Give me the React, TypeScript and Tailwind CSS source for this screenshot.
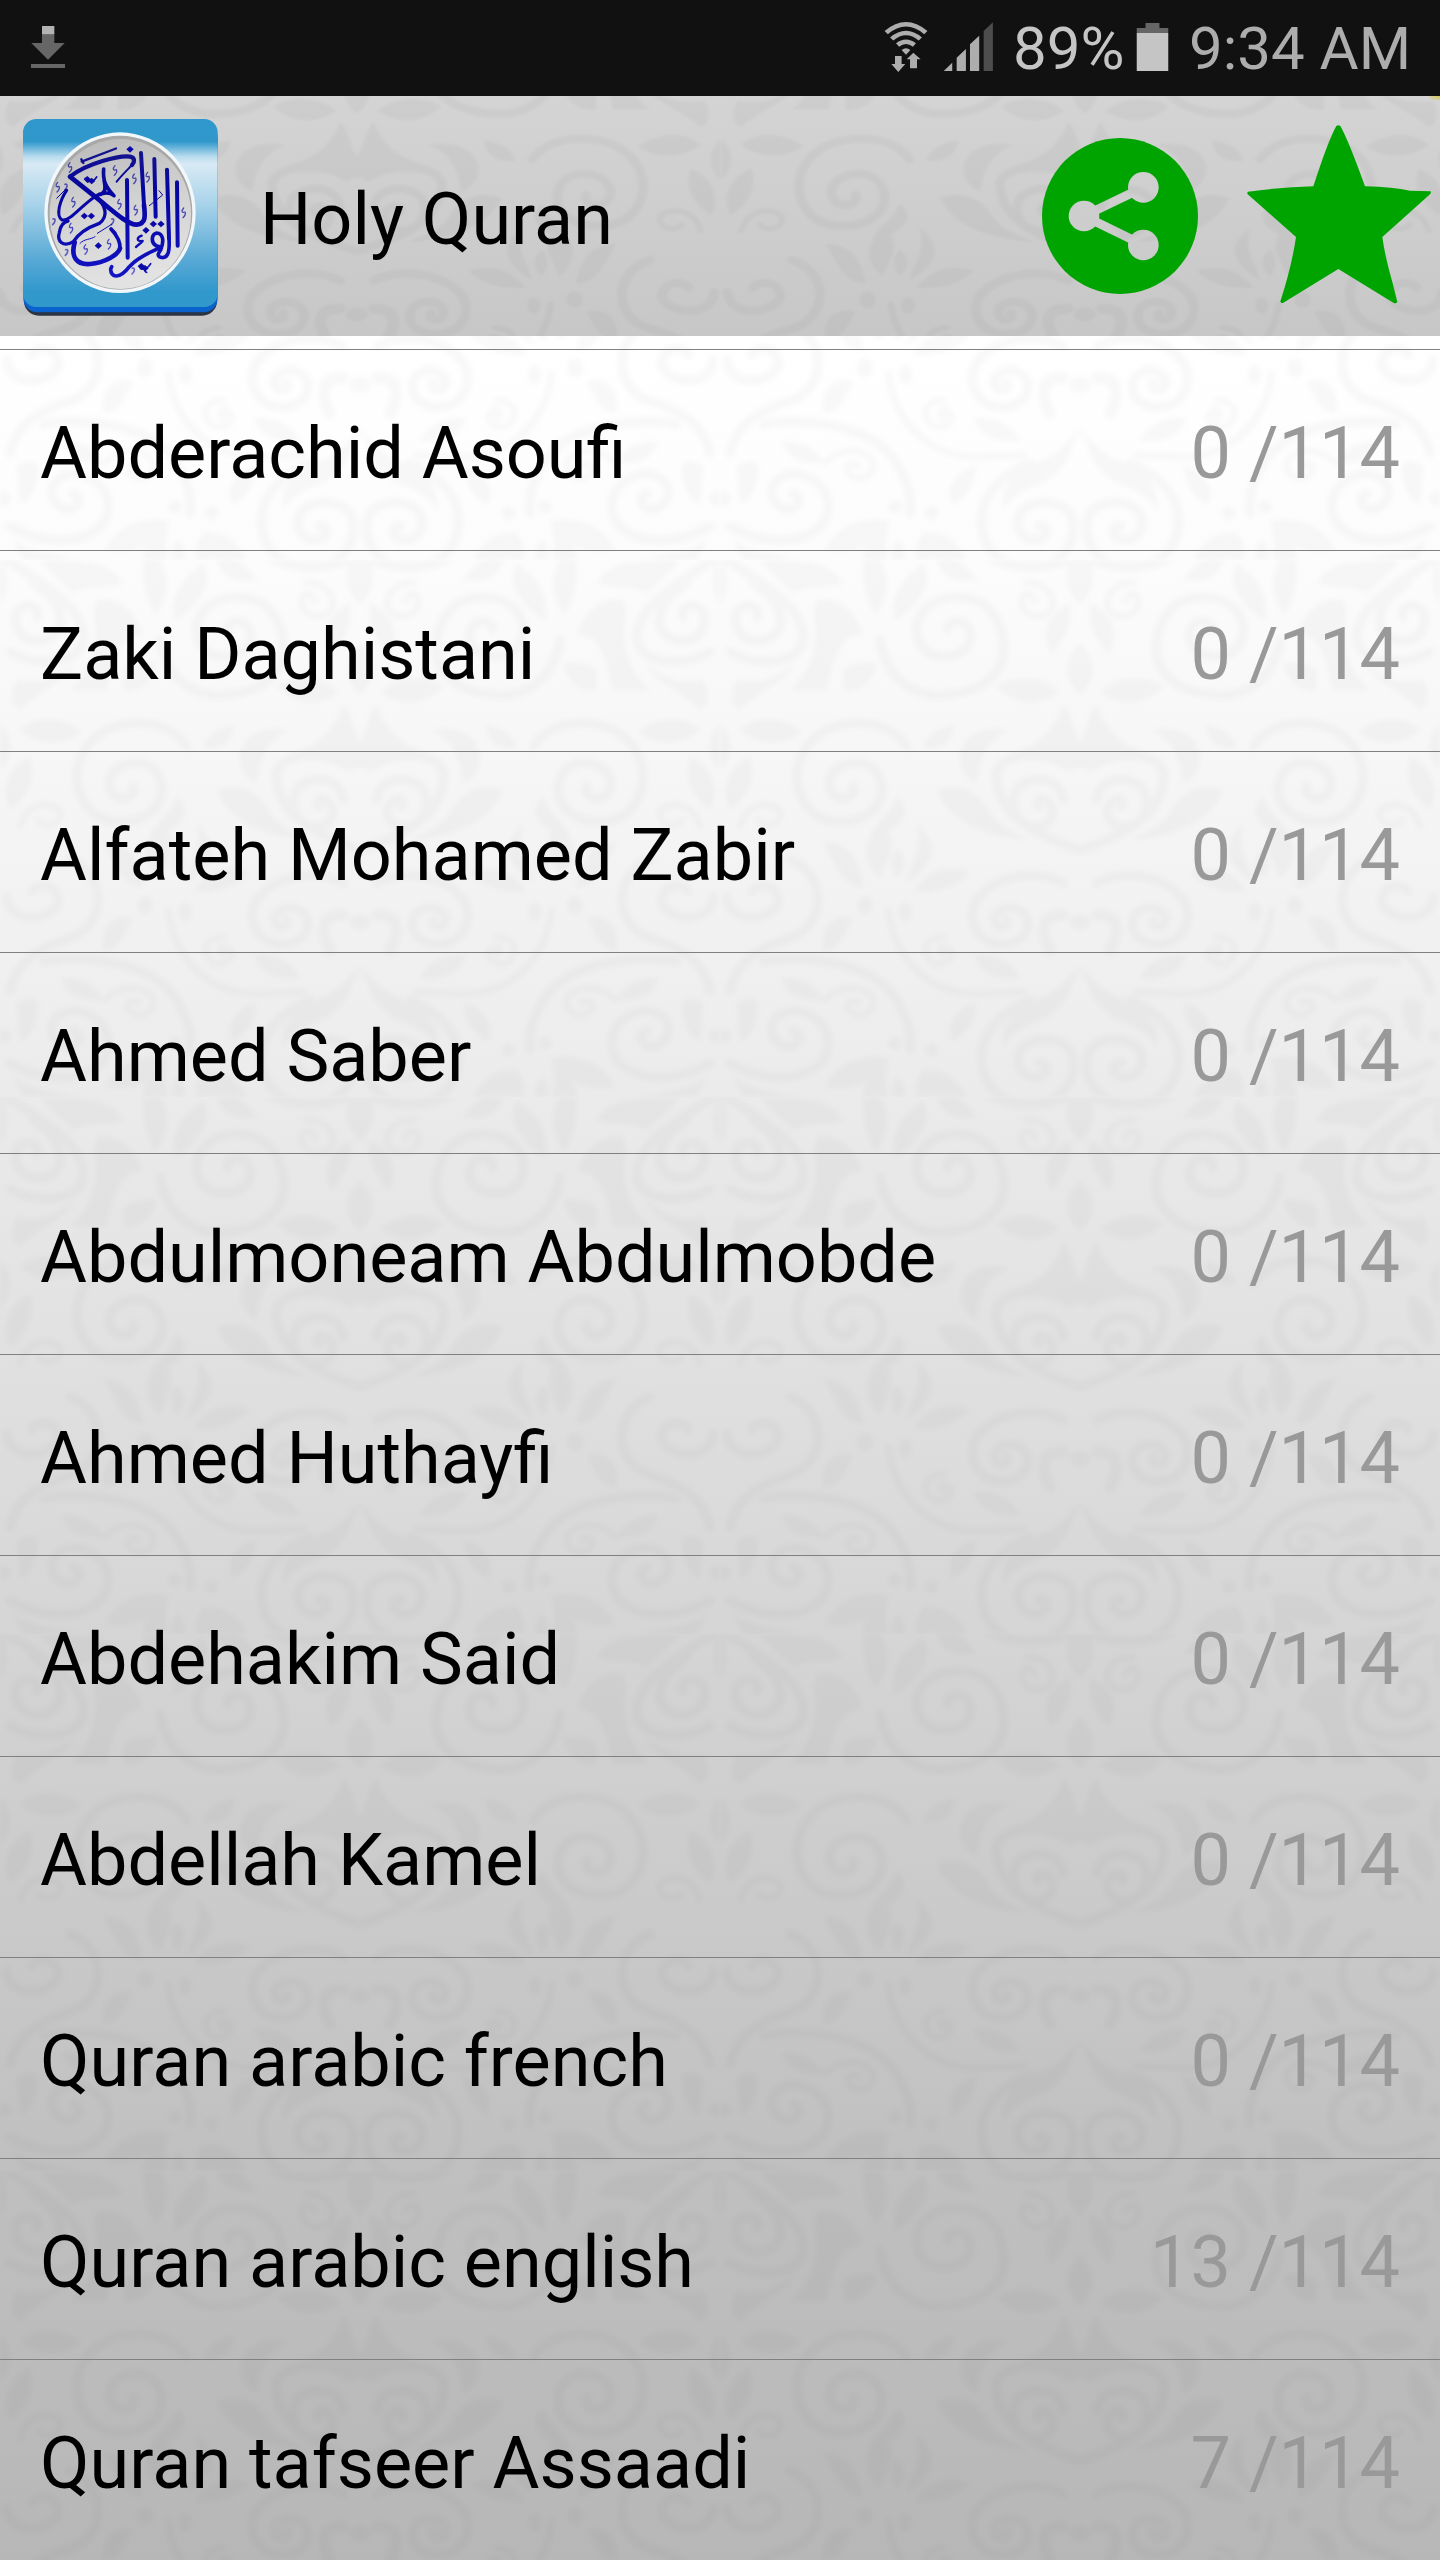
interface Reciter {
  name: string;
  done: number;
}

const TOTAL = 114;

const reciters: Reciter[] = [
  { name: 'Abderachid Asoufi', done: 0 },
  { name: 'Zaki Daghistani', done: 0 },
  { name: 'Alfateh Mohamed Zabir', done: 0 },
  { name: 'Ahmed Saber', done: 0 },
  { name: 'Abdulmoneam Abdulmobde', done: 0 },
  { name: 'Ahmed Huthayfi', done: 0 },
  { name: 'Abdehakim Said', done: 0 },
  { name: 'Abdellah Kamel', done: 0 },
  { name: 'Quran arabic french', done: 0 },
  { name: 'Quran arabic english', done: 13 },
  { name: 'Quran tafseer Assaadi', done: 7 },
];

// One half of the damask tile, the other half is its mirror image
function DamaskHalf() {
  return (
    <g transform="scale(0.33333)" stroke="#000" strokeLinecap="round" strokeLinejoin="round">
      <g transform="translate(-30 -60)">
        <g fill="none" strokeWidth="28">
          <path d="M510 300 C530 420 620 480 720 463 C850 450 895 370 878 290 C860 200 800 165 720 172 C650 182 610 230 622 290 C635 340 680 358 730 345 C785 330 795 280 765 250 C740 235 710 245 712 270" />
          <path d="M590 620 C560 570 500 545 430 550 C330 555 265 620 260 710 C265 790 310 845 390 845 C480 845 522 790 515 735 C505 680 460 658 410 672 C355 690 345 735 372 765 C400 785 440 770 430 740" />
          <path d="M1110 930 C1000 890 860 840 858 700 C875 635 1010 630 1080 680" />
          <path d="M1060 780 C1050 710 960 700 918 750 C890 815 935 870 990 858 C1035 848 1040 800 1010 782 C985 770 975 790 985 800" />
          <path d="M50 60 C180 140 285 210 280 300 C270 370 140 385 60 335" />
          <path d="M140 230 C160 200 100 180 78 220 C65 280 120 320 180 295 C235 260 220 190 130 130" />
          <path d="M975 180 C960 150 930 160 935 190 C945 240 1010 240 1028 200 C1035 160 1000 125 950 130" strokeWidth="18" />
          <path d="M820 40 C880 90 1000 90 1080 60" />
          <path d="M90 860 C110 790 170 780 210 810 C220 850 170 870 145 840" strokeWidth="18" />
        </g>
        <g stroke="none">
          <path d="M1110 310 C1060 360 1060 420 1110 465 C1160 420 1160 360 1110 310Z" />
          <path d="M1110 40 C1065 70 1050 130 1110 195 C1170 130 1155 70 1110 40Z" />
          <path d="M1080 190 C1010 220 990 290 1025 340 C1060 300 1090 260 1080 190Z" />
          <path d="M860 440 C920 400 1000 410 1050 455 C990 500 920 500 860 440Z" />
          <path d="M90 570 C140 520 220 530 275 575 C220 620 140 615 90 570Z" />
          <path d="M640 625 C650 580 690 560 735 555 C730 600 700 630 640 625Z" />
          <path d="M680 750 C740 730 790 740 830 800 C850 850 900 870 960 900 C830 890 720 850 680 750Z" />
          <path d="M750 640 C770 570 830 560 900 570 C830 600 810 650 800 730 C765 710 745 680 750 640Z" />
          <path d="M900 640 C990 620 1040 560 1060 490 C1100 540 1080 600 1140 640 V700 C1060 660 1000 630 900 640Z" />
          <path d="M120 650 C50 680 30 760 60 810 C110 770 140 720 120 650Z" />
          <path d="M150 60 C260 70 350 50 400 130 C350 150 290 130 250 160 C210 120 180 100 150 60Z" />
          <path d="M320 180 C390 170 430 210 460 280 C420 290 380 290 350 450 H240 C300 400 330 320 310 220Z" />
          <path d="M80 420 C160 440 220 400 250 370 C240 420 150 450 90 510 C60 500 60 450 80 420Z" />
          <path d="M400 390 C430 370 470 365 500 370 C490 420 450 460 400 450Z" />
          <path d="M460 60 C455 120 470 180 495 225 C540 170 540 110 510 60Z" />
          <path d="M640 70 C570 120 540 170 555 245 C600 210 680 150 640 70Z" />
          <path d="M680 60 C690 110 740 130 800 120 C780 90 760 70 740 60Z" />
          <path d="M30 50 C60 100 50 170 30 200Z" />
          <path d="M30 550 C80 600 60 660 30 690Z" />
          <path d="M560 770 C610 810 580 870 480 890 C490 850 540 830 560 770Z" />
        </g>
      </g>
      <g transform="translate(-30 780)">
        <g fill="none" strokeWidth="28">
          <path d="M1060 190 C980 145 850 165 795 245 C765 320 820 385 900 370 C965 352 970 285 920 265 C870 252 835 290 862 318 C885 328 900 310 890 300" />
          <path d="M60 730 C160 785 280 790 340 720 C385 640 320 570 240 572 C170 590 168 655 225 680 C270 682 280 640 250 632" />
          <path d="M160 425 C240 405 480 410 560 540 C595 600 605 640 600 690" />
          <path d="M535 270 C550 400 640 520 800 522 L940 516" strokeWidth="20" />
          <path d="M445 550 C430 530 400 550 420 575 C450 600 495 580 490 540 C470 495 390 490 345 540" strokeWidth="18" />
          <path d="M700 405 C680 395 690 375 715 385 C740 410 710 440 670 430 C630 400 640 355 700 350" strokeWidth="18" />
          <path d="M960 540 C860 580 810 650 815 720 C820 820 900 860 980 850 C1080 840 1110 740 1080 690 C1040 640 940 650 925 705 C915 755 960 785 1000 765 C1020 745 1005 725 985 728" />
          <path d="M240 120 C350 160 350 310 250 350 C150 380 80 420 60 510" />
          <path d="M50 230 C55 310 170 310 205 250 C210 200 150 180 125 215" />
          <path d="M1020 390 C985 320 1000 285 1060 285" strokeWidth="34" />
          <path d="M1140 860 V700" />
        </g>
        <g stroke="none">
          <path d="M1125 430 C1075 460 1070 510 960 545 C890 580 870 640 880 680 C930 600 1000 620 1050 560 C1090 520 1080 470 1125 430Z" />
          <ellipse cx="1110" cy="305" rx="32" ry="24" />
          <path d="M790 405 C860 400 910 430 930 475 C860 480 810 460 790 405Z" />
          <path d="M800 550 C740 560 705 610 725 665 C780 640 790 600 800 550Z" />
          <path d="M430 295 C370 280 330 320 340 390 C390 390 400 350 430 295Z" />
          <path d="M340 65 C400 70 440 90 460 200 C400 200 380 140 340 65Z" />
          <path d="M610 215 C660 140 720 140 780 155 C730 210 680 215 610 215Z" />
          <path d="M520 10 C450 60 460 130 510 175 C530 110 570 80 520 10Z" />
          <path d="M620 10 C670 60 700 110 590 190 C600 130 640 100 620 10Z" />
          <path d="M560 85 C530 120 550 160 560 175 C590 150 590 110 560 85Z" />
          <ellipse cx="465" cy="255" rx="24" ry="28" />
          <ellipse cx="585" cy="275" rx="20" ry="28" />
          <path d="M215 475 C280 470 320 500 340 540 C280 545 230 530 215 475Z" />
          <path d="M80 550 C110 530 150 530 145 560 C140 620 120 650 90 665Z" />
          <path d="M30 625 C75 630 75 665 30 672Z" />
          <path d="M345 800 C380 730 450 700 540 715 C510 780 430 820 345 800Z" />
          <path d="M540 735 C470 760 450 810 460 870 H510 C560 810 500 790 540 735Z" />
          <path d="M640 750 C720 740 760 800 790 870 C720 880 660 840 640 750Z" />
          <path d="M640 750 C600 800 620 850 650 880 C680 830 660 780 640 750Z" />
          <path d="M565 770 C535 800 540 840 565 860 C595 840 590 800 565 770Z" />
          <circle cx="555" cy="670" r="20" />
          <circle cx="665" cy="690" r="20" />
          <path d="M70 770 C140 830 280 810 400 870 H170 C120 860 80 810 70 770Z" />
        </g>
      </g>
    </g>
  );
}

interface DamaskProps {
  id: string;
  transform: string;
  blur: number;
  opacity: number;
}

function Damask({ id, transform, blur, opacity }: DamaskProps) {
  return (
    <svg className="absolute inset-0 w-full h-full" aria-hidden="true">
      <defs>
        <clipPath id={`${id}-half`}>
          <rect width="360" height="537" />
        </clipPath>
        <pattern id={id} width="720" height="537" patternUnits="userSpaceOnUse" patternTransform={transform}>
          <g filter={`url(#${id}-soft)`}>
            <g clipPath={`url(#${id}-half)`}>
              <DamaskHalf />
            </g>
            <g transform="translate(720 0) scale(-1 1)">
              <g clipPath={`url(#${id}-half)`}>
                <DamaskHalf />
              </g>
            </g>
          </g>
        </pattern>
        <filter id={`${id}-soft`} filterUnits="userSpaceOnUse" x="0" y="0" width="720" height="537">
          <feGaussianBlur stdDeviation={blur} />
        </filter>
      </defs>
      <rect width="100%" height="100%" fill={`url(#${id})`} opacity={opacity} />
    </svg>
  );
}

function StatusBar() {
  return (
    <div className="h-24 bg-[#111111] flex items-start overflow-hidden">
      <svg className="ml-[31px] mt-[26px] w-[34px] h-[42px]" viewBox="93 78 102 126">
        <path fill="#666" d="M126 103h37v26h31l-50 50-50-50h32z M93 192h102v12H93z" />
        <path fill="#b3b3b3" d="M126 78h37v25h-37z" />
      </svg>
      <svg
        className="ml-auto mt-[21px] w-[44px] h-[51px] shrink-0"
        viewBox="66 63 120 153"
        preserveAspectRatio="none"
      >
        <g fill="none" stroke="#adadad" strokeWidth="13">
          <path d="M72 98 Q126 48 180 98" />
          <path d="M87 117 Q126 81 165 117" />
          <path d="M103 135 Q126 116 149 135" />
        </g>
        <path fill="#adadad" d="M114 150 Q126 139 138 150 L126 164Z" />
        <path fill="#adadad" d="M96 168h18v24h10l-19 24-19-24h10z M137 205v-27h-9l18-20 20 20h-10v27z" />
      </svg>
      <svg
        className="ml-[15px] mt-[21px] w-[51px] h-[51px] shrink-0"
        viewBox="225 63 138 153"
        preserveAspectRatio="none"
      >
        <path fill="#adadad" d="M227 213l23-25v25z M262 213v-40l25-26v66z M298 213v-80l25-26v106z" />
        <path fill="#4d4d4d" d="M335 213V93l25-26v146z" />
      </svg>
      <div className="ml-[19px] mt-[14px] w-[123px] shrink-0 text-[60px] leading-[70px] text-[#c5c5c5] whitespace-nowrap">
        89%
      </div>
      <svg className="mt-[21px] w-[33px] h-[51px] shrink-0" viewBox="747 63 90 153" preserveAspectRatio="none">
        <path fill="#666" d="M773 69h38v15h24v15h-86V84h24z" />
        <path fill="#c5c5c5" d="M749 99h86v114h-86z" />
      </svg>
      <div className="ml-5 mt-[14px] w-[251px] shrink-0 text-[60px] leading-[70px] text-[#adadad] whitespace-nowrap">
        9:34 AM
      </div>
    </div>
  );
}

const hooks = [
  [90, 126], [225, 135], [283, 160], [323, 155], [53, 185], [100, 230], [238, 236], [287, 254],
  [431, 262], [93, 308], [137, 372], [207, 356],
];
const commas = [
  [42, 290], [80, 382], [280, 438], [78, 186], [218, 290],
];
const dots = [
  [133, 273], [154, 273], [175, 362], [340, 297], [363, 297], [318, 316], [270, 73], [142, 163],
  [155, 168], [304, 424], [315, 430],
];

function AppLogo() {
  return (
    <svg className="w-[196px] h-[198px] shrink-0" viewBox="69 354 588 594">
      <defs>
        <linearGradient id="tile" x1="0" y1="0" x2="0" y2="1">
          <stop offset="0" stopColor="#2f97cb" />
          <stop offset="0.12" stopColor="#3198cc" />
          <stop offset="0.2" stopColor="#b9dcee" />
          <stop offset="0.24" stopColor="#d8eaf4" />
          <stop offset="0.45" stopColor="#a9d3ea" />
          <stop offset="0.75" stopColor="#57a9d5" />
          <stop offset="0.92" stopColor="#3198cc" />
          <stop offset="1" stopColor="#3198cc" />
        </linearGradient>
        <linearGradient id="disc" x1="0" y1="0" x2="0.2" y2="1">
          <stop offset="0" stopColor="#b8b8b8" />
          <stop offset="0.5" stopColor="#d2d2d2" />
          <stop offset="1" stopColor="#e2e2e2" />
        </linearGradient>
        <linearGradient id="ink" gradientUnits="userSpaceOnUse" x1="0" y1="70" x2="0" y2="460">
          <stop offset="0" stopColor="#15158c" />
          <stop offset="0.35" stopColor="#0505a0" />
          <stop offset="1" stopColor="#1414c4" />
        </linearGradient>
      </defs>
      <rect x="72" y="380" width="579" height="567" rx="44" fill="#2b3440" />
      <rect x="70" y="370" width="583" height="567" rx="42" fill="#0a62cc" />
      <rect x="69" y="357" width="584" height="564" rx="40" fill="url(#tile)" />
      <ellipse cx="360" cy="638" rx="227" ry="241" fill="#f1f7fa" />
      <ellipse cx="360" cy="638" rx="217" ry="231" fill="#a8a8a8" />
      <ellipse cx="361" cy="642" rx="212" ry="225" fill="url(#disc)" />
      <g transform="translate(120 375)" fill="none" stroke="url(#ink)" strokeWidth="11" strokeLinecap="round" strokeLinejoin="round">
        <path strokeWidth="7" d="M125 110 L228 70.5 M124 103 L130 114" />
        <path strokeWidth="13" d="M90 155 C140 115 240 90 270 95 C286 98 284 112 276 120" />
        <path strokeWidth="6" d="M276 120 C262 135 246 150 230 170" />
        <path strokeWidth="14" d="M90 155 L165 215 C205 245 260 300 290 299 C318 296 316 275 312 240" />
        <path strokeWidth="12" d="M312 240 L303 84" />
        <path d="M165 215 C125 240 90 290 66 285 C46 272 60 225 80 196" strokeWidth="9" />
        <path d="M191 132 C188 165 196 185 222 212 C205 198 180 205 165 215 M192 165 C198 195 195 200 182 208" />
        <path d="M165 215 C200 240 205 275 178 295 C150 305 115 325 100 350 C70 368 50 350 58 322 C62 300 74 290 84 288" strokeWidth="10" />
        <path strokeWidth="14" d="M104 352 C92 395 108 420 150 417 C195 414 236 388 240 370" />
        <path d="M240 372 C242 350 228 328 213 312 L225 325" />
        <path d="M261 165 L263 398 M343 102 L347 275 M381 134 L387 340 M411 172 L413 362" strokeWidth="12" />
        <path d="M387 340 C390 385 382 402 362 397 C350 392 355 385 362 375 C374 345 368 325 350 324 C334 328 332 352 348 362 L362 366 C340 380 300 390 268 425 C240 462 212 460 212 432 L215 425" />
        <path strokeWidth="3" d="M120 355 C135 340 150 345 165 335 M172 325 L215 298 M50 220 L78 192 M328 242 L368 210 L357 197" />
        <path strokeWidth="7" d="M305 332 C288 338 290 350 308 348 C300 358 292 360 288 366" />
        <path strokeWidth="5" d="M136 160 q6 18 14 6 q8 8 20 -10 M298 422 q6 18 14 6 q8 6 20 -12 M316 430 q-4 10 4 12" />
        {hooks.map(([x, y]) => (
          <path key={`${x}-${y}`} strokeWidth="4" strokeOpacity="0.7" d={`M${x} ${y - 13} c-8 9 -6 16 4 12 c4 7 -1 12 -6 17`} />
        ))}
        {commas.map(([x, y]) => (
          <path key={`${x}-${y}`} strokeWidth="5" strokeOpacity="0.6" d={`M${x - 3} ${y - 8} c8 -3 9 8 -1 17`} />
        ))}
      </g>
      <g transform="translate(120 375)" fill="#0a0aa8">
        {dots.map(([x, y]) => (
          <path key={`${x}-${y}`} d={`M${x} ${y - 10} l11 10 -11 10 -11 -10z`} />
        ))}
      </g>
    </svg>
  );
}

function ShareIcon() {
  return (
    <svg className="w-[158px] h-[158px]" viewBox="63 140 474 474">
      <mask id="share-nodes" maskUnits="userSpaceOnUse" x="63" y="140" width="474" height="474">
        <rect x="63" y="140" width="474" height="474" fill="#fff" />
        <g fill="#000" stroke="#000">
          <path d="M370 291 L192 377 L370 464" fill="none" strokeWidth="27" />
          <circle cx="192" cy="377" r="46" stroke="none" />
          <circle cx="370" cy="291" r="46" stroke="none" />
          <circle cx="370" cy="464" r="46" stroke="none" />
        </g>
      </mask>
      <circle cx="300" cy="377" r="234" fill="#00a400" mask="url(#share-nodes)" />
    </svg>
  );
}

function StarIcon() {
  return (
    <svg className="w-[187px] h-[181px]" viewBox="678 102 561 543">
      <path
        fill="#00a400"
        d="M949 108 Q955 103 961 108 Q985 150 1035 289 Q1120 291 1170 302 L1232 304 Q1234 308 1230 313 L1087 441 Q1095 500 1118 580 L1132 636 Q1128 642 1120 638 L955 537 L790 638 Q782 642 781 634 Q815 530 828 441 L683 313 Q680 308 684 305 Q790 291 880 289 Q925 150 949 108Z"
      />
    </svg>
  );
}

function Header() {
  return (
    <header className="relative h-60 bg-linear-to-b from-[#d4d4d4] to-[#c7c7c7]">
      <Damask id="damask-header" transform="translate(-7 -101.6) scale(1.011 0.885)" blur={1.5} opacity={0.032} />
      <span className="absolute right-0 top-0 w-2.5 h-1 bg-linear-to-bl from-[#d2c850] to-transparent" />
      <div className="relative h-full flex items-start">
        <div className="ml-[23px] mt-[22px]">
          <AppLogo />
        </div>
        <h1 className="ml-[41px] h-full pt-[7px] flex items-center text-7xl text-black">Holy Quran</h1>
        <button type="button" className="ml-auto mt-[41px]">
          <ShareIcon />
        </button>
        <button type="button" className="ml-[47px] mr-[7px] mt-[28px]">
          <StarIcon />
        </button>
      </div>
    </header>
  );
}

function ReciterRow({ name, done }: Reciter) {
  return (
    <li className="h-[201px] border-t border-[#808080] px-10 pt-[8px] flex items-center justify-between text-7xl">
      <span className="text-black">{name}</span>
      <span className="text-[#999999]">
        {done} /{TOTAL}
      </span>
    </li>
  );
}

export default function App() {
  return (
    <div className="w-[1440px] h-[2560px] overflow-hidden flex flex-col font-['Roboto',sans-serif]">
      <StatusBar />
      <Header />
      <main className="relative flex-1 bg-[linear-gradient(to_bottom,#ffffff_0%,#fcfcfc_10%,#f1f1f1_27%,#e6e6e6_40%,#d2d2d2_62%,#c0c0c0_82%,#b7b7b7_100%)]">
        <Damask id="damask-list" transform="translate(0 -313)" blur={2.5} opacity={0.025} />
        <ul className="relative pt-[13px]">
          {reciters.map((r) => (
            <ReciterRow key={r.name} {...r} />
          ))}
        </ul>
      </main>
    </div>
  );
}
